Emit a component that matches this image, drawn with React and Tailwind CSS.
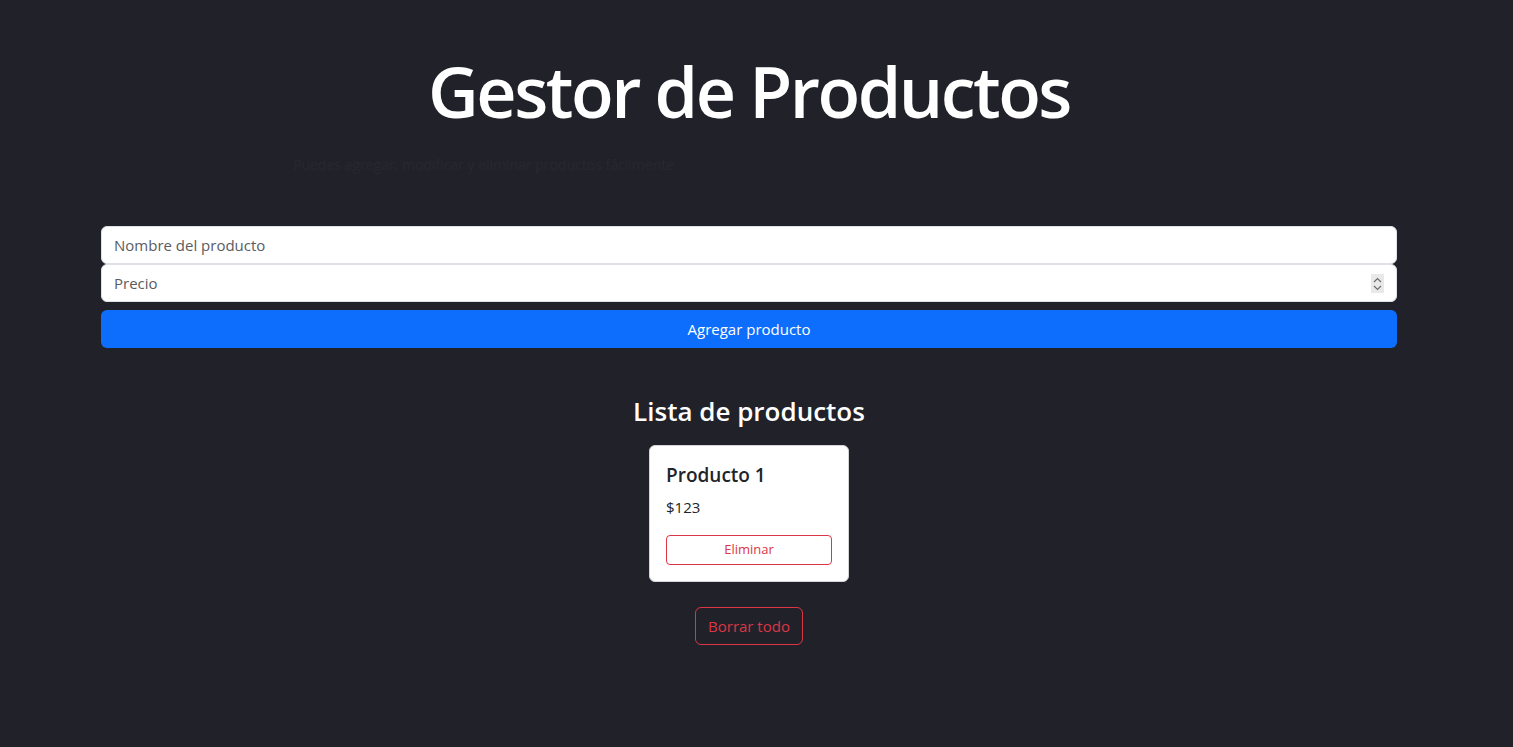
import React, { useState } from 'react';

const font = { fontFamily: '"Open Sans", "Noto Sans", sans-serif' };

function ProductCard({ product, onDelete }) {
  return (
    <div className="w-[200px] rounded-md border border-[#d4d4d6] bg-white p-4 text-[#212529]">
      <h5 className="mb-[7px] pt-px text-[19px] font-semibold leading-[1.3]">{product.name}</h5>
      <p className="mb-4 text-[15px] leading-6">${product.price}</p>
      <button
        onClick={() => onDelete(product.id)}
        className="h-[30px] w-full rounded border border-[#dc3545] text-[13px] text-[#dc3545]"
      >
        Eliminar
      </button>
    </div>
  );
}

export default function App() {
  const [name, setName] = useState('');
  const [price, setPrice] = useState('');
  const [products, setProducts] = useState([{ id: 1, name: 'Producto 1', price: 123 }]);

  const addProduct = () => {
    if (!name || !price) return;
    setProducts([...products, { id: Date.now(), name, price }]);
    setName('');
    setPrice('');
  };

  return (
    <div className="min-h-[747px] bg-[#212229] pr-[15px] text-white" style={font}>
      <div className="mx-auto w-[1296px] pt-[49px]">
        <h1 className="text-center text-[70px] font-semibold leading-[1.2] tracking-[-2.5px]">Gestor de Productos</h1>
        <p className="mt-[20px] pl-[192px] text-[14px] leading-6 text-[#27282f]">
          Puedes agregar, modificar y eliminar productos fácilmente
        </p>

        <div className="mt-[49px] flex flex-col">
          <input
            value={name}
            onChange={(e) => setName(e.target.value)}
            placeholder="Nombre del producto"
            className="h-[38px] rounded-md border border-[#dee2e6] bg-white px-3 text-[15px] text-[#212529] outline-none placeholder:text-[#595c60]"
          />
          <div className="relative">
            <input
              value={price}
              onChange={(e) => setPrice(e.target.value)}
              placeholder="Precio"
              className="h-[38px] w-full rounded-md border border-[#dee2e6] bg-white px-3 text-[15px] text-[#212529] outline-none placeholder:text-[#595c60]"
            />
            <div className="absolute right-[13px] top-[10px] flex h-[19px] w-[13px] flex-col items-center justify-center bg-[#e9e9ea]">
              <svg width="9" height="16" viewBox="0 0 9 16" fill="none" stroke="#6b6b6b" strokeWidth="1.2">
                <path d="M1 6 L4.5 2.5 L8 6" />
                <path d="M1 10 L4.5 13.5 L8 10" />
              </svg>
            </div>
          </div>
          <button
            onClick={addProduct}
            className="mt-2 h-[38px] rounded-md bg-[#0d6efd] text-[15px] text-white"
          >
            Agregar producto
          </button>
        </div>

        <h3 className="mt-[48px] text-center text-[26px] font-semibold leading-[1.2]">Lista de productos</h3>
        <div className="mt-[18px] flex justify-center">
          {products.map((p) => (
            <ProductCard key={p.id} product={p} onDelete={(id) => setProducts(products.filter((x) => x.id !== id))} />
          ))}
        </div>
        <div className="mt-[25px] flex justify-center">
          <button
            onClick={() => setProducts([])}
            className="h-[38px] rounded-md border border-[#dc3545] px-3 text-[15px] text-[#dc3545]"
          >
            Borrar todo
          </button>
        </div>
      </div>
    </div>
  );
}
